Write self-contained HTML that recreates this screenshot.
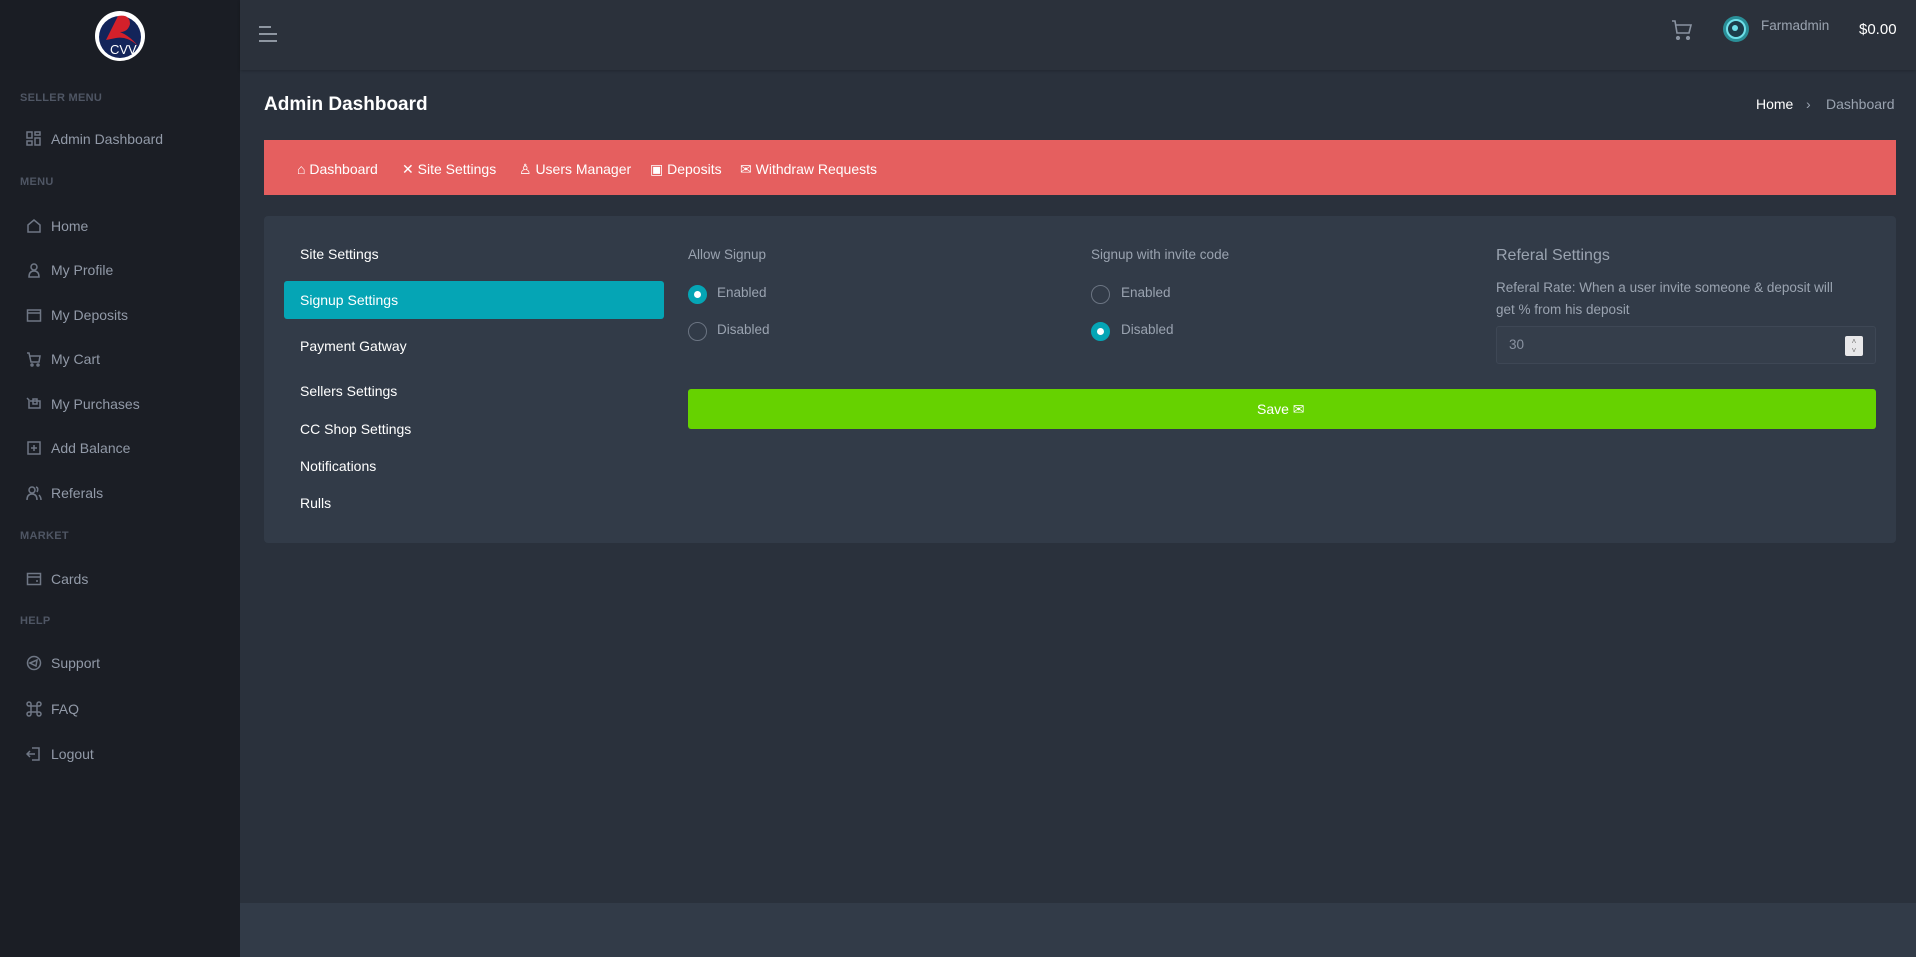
<!DOCTYPE html>
<html><head><meta charset="utf-8"><style>
*{box-sizing:border-box;margin:0;padding:0}
body{width:1916px;height:957px;background:#2a313c;font-family:"Liberation Sans",sans-serif;position:relative;overflow:hidden;color:#fff}
.abs{position:absolute}
#side{left:0;top:0;width:240px;height:957px;background:#1b1e25}
#logo{left:0;top:0;width:240px;height:70px;background:#1a1d24}
.sl{position:absolute;left:20px;font-size:11px;font-weight:bold;color:#4f5664;letter-spacing:.3px}
.si{position:absolute;left:26px;font-size:14px;color:#929aa8;display:flex;align-items:center}
.si svg{width:16px;height:16px;margin-right:9px;stroke:#6f7785;fill:none;stroke-width:1.5}
#hdr{left:240px;top:0;width:1676px;height:70px;background:#2b313b;box-shadow:0 1px 3px rgba(0,0,0,.2)}
#foot{left:240px;top:903px;width:1676px;height:54px;background:#323b48}
.t{position:absolute;white-space:nowrap}
#banner{left:264px;top:140px;width:1632px;height:55px;background:#e55f5f}
.bi{position:absolute;top:161px;font-size:14px;color:#fff;white-space:nowrap}
#card{left:264px;top:216px;width:1632px;height:327px;background:#323b48;border-radius:4px}
.nav{position:absolute;left:300px;font-size:14px;color:#fff}
.lab{position:absolute;font-size:13.5px;color:#9aa3b0}
.radio{position:absolute;width:19px;height:19px;border-radius:50%;border:1px solid #6b7482}
.radio.on{background:#05a5b5;border-color:#05a5b5}
.radio.on::after{content:"";position:absolute;left:5px;top:5px;width:7px;height:7px;border-radius:50%;background:#fff}
</style></head><body>
<div id="side" class="abs"></div>
<div id="logo" class="abs">
<svg class="abs" style="left:94px;top:10px" width="52" height="52" viewBox="0 0 52 52"><circle cx="26" cy="26" r="25" fill="#fff"/><circle cx="26" cy="27" r="21" fill="#13245a"/><path d="M12 30 L24 6 Q36 4 36 14 Q34 22 26 22 Q36 26 44 36 Q34 26 22 28 Z" fill="#d4202a"/><text x="16" y="44" font-size="13" fill="#fff" font-family="Liberation Sans">CVV</text></svg>
</div>
<div class="sl" style="top:92px">SELLER MENU</div>
<div class="si" style="top:131px"><svg viewBox="0 0 16 16"><rect x="1" y="1" width="5" height="6"/><rect x="9" y="1" width="5" height="3"/><rect x="1" y="10" width="5" height="4"/><rect x="9" y="7" width="5" height="7"/></svg>Admin Dashboard</div>
<div class="sl" style="top:176px">MENU</div>
<div class="si" style="top:218px"><svg viewBox="0 0 16 16"><path d="M2 7 L8 2 L14 7 V14 H2Z"/></svg>Home</div>
<div class="si" style="top:262px"><svg viewBox="0 0 16 16"><circle cx="8" cy="5" r="3"/><path d="M3 15 Q3 9 8 9 Q13 9 13 15Z"/></svg>My Profile</div>
<div class="si" style="top:307px"><svg viewBox="0 0 16 16"><rect x="1.5" y="3" width="13" height="11"/><path d="M1.5 6 H14.5"/></svg>My Deposits</div>
<div class="si" style="top:351px"><svg viewBox="0 0 16 16"><path d="M1 2 H3 L5 11 H13 L14 5 H4"/><circle cx="6" cy="14" r="1"/><circle cx="12" cy="14" r="1"/></svg>My Cart</div>
<div class="si" style="top:396px"><svg viewBox="0 0 16 16"><path d="M1 2 L3 4 V12 H14 V5 H4"/><rect x="7" y="3" width="4" height="5"/></svg>My Purchases</div>
<div class="si" style="top:440px"><svg viewBox="0 0 16 16"><rect x="2" y="2" width="12" height="12"/><path d="M8 5 V11 M5 8 H11"/></svg>Add Balance</div>
<div class="si" style="top:485px"><svg viewBox="0 0 16 16"><circle cx="6" cy="5" r="3"/><path d="M1 15 Q1 9 6 9 Q11 9 11 15 M10 2 Q13 3 11 7 M13 10 Q15 12 15 15"/></svg>Referals</div>
<div class="sl" style="top:530px">MARKET</div>
<div class="si" style="top:571px"><svg viewBox="0 0 16 16"><rect x="1.5" y="2.5" width="13" height="11"/><path d="M1.5 6 H14.5 M10 10 H12"/></svg>Cards</div>
<div class="sl" style="top:615px">HELP</div>
<div class="si" style="top:655px"><svg viewBox="0 0 16 16"><circle cx="8" cy="8" r="6.5"/><path d="M4 8 L11 5 L10 11 Z"/></svg>Support</div>
<div class="si" style="top:701px"><svg viewBox="0 0 16 16"><path d="M5 5 H11 V11 H5Z M5 5 H3 A2 2 0 1 1 5 3Z M11 5 V3 A2 2 0 1 1 13 5Z M11 11 H13 A2 2 0 1 1 11 13Z M5 11 V13 A2 2 0 1 1 3 11Z"/></svg>FAQ</div>
<div class="si" style="top:746px"><svg viewBox="0 0 16 16"><path d="M6 2 H13 V14 H6 M1 8 H9 M4 5 L1 8 L4 11"/></svg>Logout</div>

<div id="hdr" class="abs">
<svg class="abs" style="left:19px;top:25px" width="18" height="18" viewBox="0 0 18 18" stroke="#b0b7c3" stroke-width="1.6"><path d="M0 2 H12 M0 9 H18 M0 16 H18"/></svg>
<svg class="abs" style="left:1431px;top:20px" width="22" height="20" viewBox="0 0 22 20" fill="none" stroke="#8a93a1" stroke-width="1.6"><path d="M1 1 H4 L6 13 H18 L20 5 H5"/><circle cx="7" cy="18" r="1.3" fill="#8a93a1"/><circle cx="17" cy="18" r="1.3" fill="#8a93a1"/></svg>
<svg class="abs" style="left:1483px;top:16px" width="26" height="26" viewBox="0 0 26 26"><circle cx="13" cy="13" r="13" fill="#2a8f98"/><circle cx="13" cy="13" r="9" fill="#1c3c4a" stroke="#6fe0ea" stroke-width="2"/><circle cx="12" cy="12" r="3" fill="#6fe0ea"/></svg>
<div class="t" style="left:1521px;top:18px;font-size:13.5px;color:#9aa3b0">Farmadmin</div>
<div class="t" style="left:1619px;top:21px;font-size:15px;color:#fff">$0.00</div>
</div>

<div class="t" style="left:264px;top:94px;font-size:19px;font-weight:bold">Admin Dashboard</div>
<div class="t" style="left:1756px;top:96px;font-size:14px;color:#fff">Home</div>
<div class="t" style="left:1806px;top:96px;font-size:14px;color:#9aa3b0">›</div>
<div class="t" style="left:1826px;top:96px;font-size:14px;color:#9aa3b0">Dashboard</div>

<div id="banner" class="abs"></div>
<div class="bi" style="left:297px">⌂ Dashboard</div>
<div class="bi" style="left:402px">✕ Site Settings</div>
<div class="bi" style="left:519px">♙ Users Manager</div>
<div class="bi" style="left:650px">▣ Deposits</div>
<div class="bi" style="left:740px">✉ Withdraw Requests</div>

<div id="card" class="abs"></div>
<div class="nav" style="top:246px">Site Settings</div>
<div class="abs" style="left:284px;top:281px;width:380px;height:38px;background:#05a5b5;border-radius:3px"></div>
<div class="nav" style="top:292px">Signup Settings</div>
<div class="nav" style="top:338px">Payment Gatway</div>
<div class="nav" style="top:383px">Sellers Settings</div>
<div class="nav" style="top:421px">CC Shop Settings</div>
<div class="nav" style="top:458px">Notifications</div>
<div class="nav" style="top:495px">Rulls</div>

<div class="lab" style="left:688px;top:247px">Allow Signup</div>
<div class="radio on" style="left:688px;top:285px"></div><div class="lab" style="left:717px;top:285px">Enabled</div>
<div class="radio" style="left:688px;top:322px"></div><div class="lab" style="left:717px;top:322px">Disabled</div>
<div class="lab" style="left:1091px;top:247px">Signup with invite code</div>
<div class="radio" style="left:1091px;top:285px"></div><div class="lab" style="left:1121px;top:285px">Enabled</div>
<div class="radio on" style="left:1091px;top:322px"></div><div class="lab" style="left:1121px;top:322px">Disabled</div>

<div class="lab" style="left:1496px;top:247px;font-size:16px">Referal Settings</div>
<div class="lab" style="left:1496px;top:277px;font-size:13.5px;line-height:22px;width:345px">Referal Rate: When a user invite someone &amp; deposit will get % from his deposit</div>
<div class="abs" style="left:1496px;top:326px;width:380px;height:38px;background:#353e4b;border:1px solid #3e4755;border-radius:3px"></div>
<div class="lab" style="left:1509px;top:337px;color:#8a93a1">30</div>
<div class="abs" style="left:1845px;top:336px;width:18px;height:20px;background:#e8e8ea;border-radius:2px;font-size:8px;color:#777;text-align:center;line-height:9px;padding-top:1px">˄<br>˅</div>

<div class="abs" style="left:688px;top:389px;width:1188px;height:40px;background:#66d200;border-radius:3px"></div>
<div class="t" style="left:1257px;top:401px;font-size:14px;color:#fff">Save ✉</div>

<div id="foot" class="abs"></div>
</body></html>
